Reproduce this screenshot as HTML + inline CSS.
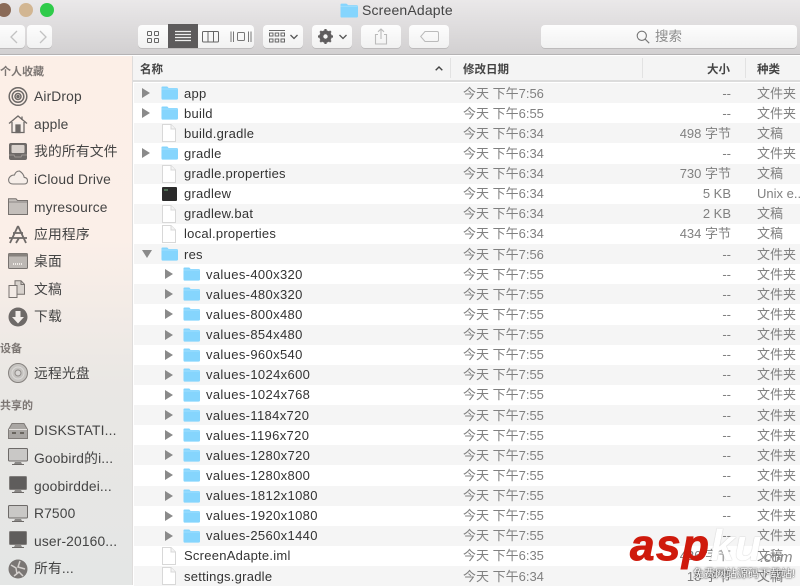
<!DOCTYPE html>
<html><head><meta charset="utf-8">
<style>
*{box-sizing:border-box}
html,body{margin:0;padding:0;background:#fff}
body{width:800px;height:585px;overflow:hidden;position:relative;background:#fff;font-family:"Liberation Sans","Noto Sans CJK SC",sans-serif;color:#333;filter:blur(.35px)}
.abs,.btn,.sb,.sh,.r span,.r svg{position:absolute}
#tb{position:absolute;left:0;top:0;width:800px;height:55px;background:linear-gradient(#eae8e9,#d2d0d1);border-bottom:1px solid #b5b3b4}
.btn{top:25px;height:23px;background:linear-gradient(#fdfdfd,#f1f1f1);border-radius:4px;box-shadow:0 1px 0 #bdbbbc}
#side{position:absolute;left:0;top:56px;width:133px;height:529px;background:linear-gradient(#fcefe7 0,#fbefe8 35%,#e9e7e4 62%,#e4e6e5 100%);border-right:1px solid #dedcdb}
.sh{left:0;font-size:11px;font-weight:bold;color:#7c7673;line-height:14px}
.sb{left:34px;margin-top:1px;font-size:13.8px;color:#444;line-height:18px;white-space:nowrap;letter-spacing:.15px}
.si{position:absolute;left:8px}
#hd{position:absolute;left:133px;top:56px;width:667px;height:26px;background:#f4f4f4;border-bottom:2px solid #dcdcdc;font-size:11.5px;font-weight:bold;color:#444}
#hd span{position:absolute;top:5px}
#hd i{position:absolute;top:2px;width:1px;height:20px;background:#e2e2e2}
#list{position:absolute;left:134px;top:83px;width:666px}
.r{position:relative;height:20.125px;font-size:13px;line-height:20px;white-space:nowrap}
.r:nth-child(odd){background:#f5f5f5}
.r span{top:.6px}
.n{left:50px;color:#333;letter-spacing:.25px}
.n2{left:72px;color:#333;letter-spacing:.35px}
.d{left:329px;color:#808080;font-size:13px}
.z{right:69px;color:#808080;font-size:13px}
.k{left:623px;color:#808080;font-size:13px}
.r .tri{left:8px;top:5px;width:8px;height:10px}
.r .tri2{left:31px;top:5px;width:8px;height:10px}
.r .f{left:27px;top:3px;width:17px;height:14px}
.r .f2{left:49px;top:3px;width:17px;height:14px}
.doc{left:28px;top:1px}
</style></head><body>
<svg width="0" height="0" style="position:absolute"><defs>
<symbol id="fo" viewBox="0 0 18 16" preserveAspectRatio="none"><path d="M.5 3V1.600q0-1 1-1h4.600q.8 0 1.300.8l.6.9h8.500q1.500 0 1.500 1.500V14q0 1.500-1.500 1.500h-15Q.5 15.500.5 14z" fill="#85d5fd"/><path d="M.5 3.400h17" stroke="#a8e2fe" stroke-width=".8"/></symbol>
<symbol id="dc" viewBox="0 0 14 18"><path d="M.5.5h8.500l4.500 4.500v12.500H.5z" fill="#fff" stroke="#d8d8d8"/><path d="M9 .5V5h4.500" fill="#f4f4f4" stroke="#d8d8d8"/></symbol>
<symbol id="tr" viewBox="0 0 9 9" preserveAspectRatio="none"><path d="M0 0l9 4.500-9 4.500z" fill="#8a8a8a"/></symbol>
<symbol id="mon" viewBox="0 0 20 18"><rect x=".5" y=".5" width="19" height="12.500" rx="1" fill="#c9c8c6" stroke="#6d6a68"/><path d="M7 14h6l1 2H6z" fill="#8b8987"/><path d="M4 16.500h12" stroke="#6d6a68"/></symbol>
<symbol id="mond" viewBox="0 0 20 18"><rect x="1.500" y=".5" width="17" height="13" rx="1" fill="#5f5d5c" stroke="#807d7b"/><path d="M7 14h6l1 2H6z" fill="#8b8987"/><path d="M4 16.500h12" stroke="#6d6a68"/></symbol>
</defs></svg>

<div id="tb">
<div class="abs" style="left:-3px;top:3px;width:14px;height:14px;border-radius:50%;background:#8a6a57"></div>
<div class="abs" style="left:19px;top:3px;width:14px;height:14px;border-radius:50%;background:#d2b692"></div>
<div class="abs" style="left:40px;top:3px;width:14px;height:14px;border-radius:50%;background:#2fcb4a"></div>
<svg class="abs" style="left:340px;top:3px" width="18" height="15"><use href="#fo" width="18" height="15"/></svg>
<div class="abs" style="left:362px;top:2px;font-size:14px;line-height:17px;color:#444;letter-spacing:.17px">ScreenAdapte</div>

<div class="btn" style="left:-4px;width:29px"></div>
<div class="btn" style="left:27px;width:25px"></div>
<svg class="abs" style="left:4px;top:29px" width="44" height="16" fill="none" stroke="#c2c2c2" stroke-width="1.300"><path d="M13 2L7 8l6 6M36 2l6 6-6 6"/></svg>

<div class="btn" style="left:138px;width:116px"></div>
<div class="abs" style="left:168px;top:24px;width:30px;height:24px;background:#5d5b5c"></div>
<svg class="abs" style="left:147px;top:31px" width="12" height="12" fill="none" stroke="#666"><rect x=".5" y=".5" width="4" height="4" rx=".6"/><rect x="7.500" y=".5" width="4" height="4" rx=".6"/><rect x=".5" y="7.500" width="4" height="4" rx=".6"/><rect x="7.500" y="7.500" width="4" height="4" rx=".6"/></svg>
<svg class="abs" style="left:175px;top:30px" width="16" height="13" stroke="#eee" stroke-width="1.200"><path d="M0 1.500h16M0 4.500h16M0 7.500h16M0 10.500h16"/></svg>
<svg class="abs" style="left:202px;top:31px" width="18" height="12" fill="none" stroke="#666"><rect x=".5" y=".5" width="16" height="10.500" rx="1"/><path d="M6 .5v10.500M11.500 .5v10.500"/></svg>
<svg class="abs" style="left:230px;top:31px" width="22" height="12" fill="none" stroke="#777"><rect x="7.500" y="1.500" width="7" height="8" rx="1"/><path d="M1 .5v10.500M3.500 .5v10.500M18.500 .5v10.500M21 .5v10.500"/></svg>

<div class="btn" style="left:263px;width:40px"></div>
<svg class="abs" style="left:269px;top:30px" width="16" height="14" fill="none" stroke="#666"><path d="M0 .5h16"/><rect x=".5" y="3" width="3.500" height="3"/><rect x="6.200" y="3" width="3.500" height="3"/><rect x="12" y="3" width="3.500" height="3"/><rect x=".5" y="9" width="3.500" height="3"/><rect x="6.200" y="9" width="3.500" height="3"/><rect x="12" y="9" width="3.500" height="3"/></svg>
<svg class="abs" style="left:290px;top:34px" width="8" height="6" fill="none" stroke="#555" stroke-width="1.300"><path d="M.5 1L4 4.500 7.500 1"/></svg>

<div class="btn" style="left:312px;width:40px"></div>
<svg class="abs" style="left:318px;top:29px" width="15" height="15"><circle cx="7.500" cy="7.500" r="4.700" fill="none" stroke="#5f5d5e" stroke-width="3"/><path d="M7.500 0v15M0 7.500h15M2.200 2.200l10.600 10.600M12.800 2.200L2.200 12.800" stroke="#5f5d5e" stroke-width="2.200"/><circle cx="7.500" cy="7.500" r="2.200" fill="#f6f6f6"/></svg>
<svg class="abs" style="left:339px;top:34px" width="8" height="6" fill="none" stroke="#555" stroke-width="1.300"><path d="M.5 1L4 4.500 7.500 1"/></svg>

<div class="btn" style="left:361px;width:40px"></div>
<svg class="abs" style="left:374px;top:28px" width="14" height="17" fill="none" stroke="#bbb" stroke-width="1.100"><path d="M4 6.500H1.500v9.500h11V6.500H10M7 11V1M4 3.800L7 1l3 2.800"/></svg>

<div class="btn" style="left:409px;width:40px"></div>
<svg class="abs" style="left:420px;top:31px" width="19" height="11" fill="none" stroke="#bbb"><path d="M5 .5h12q1.500 0 1.500 1.500v7q0 1.500-1.500 1.500H5L.7 5.500z"/></svg>

<div class="btn" style="left:541px;width:256px"></div>
<svg class="abs" style="left:636px;top:30px" width="14" height="14" fill="none" stroke="#777" stroke-width="1.100"><circle cx="5.800" cy="5.800" r="4.600"/><path d="M9.200 9.200l4 4"/></svg>
<div class="abs" style="left:655px;top:28px;font-size:13.5px;line-height:17px;color:#8c8c8c">搜索</div>
</div>

<div id="side">
<div class="sh" style="top:9px">个人收藏</div>

<svg class="si" style="top:31px" width="20" height="19" fill="none" stroke="#6e6a68" stroke-width="1.500"><circle cx="10" cy="9.500" r="8.800"/><circle cx="10" cy="9.500" r="5.800"/><circle cx="10" cy="9.500" r="3"/><circle cx="10" cy="9.500" r="1" fill="#6e6a68"/></svg>
<div class="sb" style="top:31px">AirDrop</div>

<svg class="si" style="top:58px" width="20" height="20" fill="none" stroke="#6e6a68" stroke-width="1.300"><path d="M1 9.500L10 2l9 7.500"/><path d="M4 8v10.500h12V8" fill="#f6eee9"/><rect x="8" y="11" width="4" height="7.500" fill="#6e6a68"/><path d="M14 2.500V6"/></svg>
<div class="sb" style="top:59px">apple</div>

<svg class="si" style="top:87px" width="20" height="17"><rect x="1" y="0" width="18" height="17" rx="2" fill="#6e6a68"/><rect x="3.500" y="2" width="13" height="8" rx="1" fill="#d9d2cd"/><path d="M1 12h5l1 2h6l1-2h5" fill="none" stroke="#9c9692"/></svg>
<div class="sb" style="top:86px">我的所有文件</div>

<svg class="si" style="top:114px" width="20" height="15" fill="none" stroke="#7a7674" stroke-width="1.100"><path d="M5 14h11q3.500 0 3.500-3.300 0-3-3.300-3.300C15.700 4 13.800 2.500 11.500 1 9 1 7.200 2.500 6.500 5 3 4.800 .6 7.500 .6 10 .6 12.500 2.500 14 5 14z" fill="#f6eee9"/></svg>
<div class="sb" style="top:114px">iCloud Drive</div>

<svg class="si" style="top:142px" width="20" height="17"><path d="M.5 16.500V.8h7.500l1.500 1.700h10v14z" fill="#c4bfbb" stroke="#77726f"/><path d="M1 4h18" stroke="#8c8784"/></svg>
<div class="sb" style="top:142px">myresource</div>

<svg class="si" style="top:169px" width="20" height="19" fill="none" stroke="#6e6a68" stroke-width="1.800"><path d="M10 1L2 18M10 1l8 17M1 13h18M5 8h10M8 18l3-5"/></svg>
<div class="sb" style="top:169px">应用程序</div>

<svg class="si" style="top:197px" width="20" height="16"><rect x=".5" y=".5" width="19" height="15" rx="1" fill="#bdb8b4" stroke="#77726f"/><rect x=".5" y=".5" width="19" height="3" fill="#87827e"/><path d="M5 11h10" stroke="#f1ece8" stroke-width="2" stroke-dasharray="1 1"/></svg>
<div class="sb" style="top:196px">桌面</div>

<svg class="si" style="top:224px" width="19" height="18" fill="none" stroke="#77726f"><path d="M7 .8h6l3.500 3.500v10H7z" fill="#d8d2cd"/><path d="M1 5.500h8v12H1z" fill="#f3ebe6"/><path d="M13 1v3.500h3.500"/></svg>
<div class="sb" style="top:224px">文稿</div>

<svg class="si" style="top:251px" width="20" height="20"><circle cx="10" cy="10" r="9.500" fill="#6e6a68"/><path d="M7.500 4h5v6H16l-6 6.500L4 10h3.500z" fill="#f3eeea"/></svg>
<div class="sb" style="top:251px">下载</div>

<div class="sh" style="top:286px">设备</div>
<svg class="si" style="top:307px" width="20" height="20"><circle cx="10" cy="10" r="9.500" fill="#c6c4c1" stroke="#85817e"/><circle cx="10" cy="10" r="6" fill="none" stroke="#dcdad8"/><circle cx="10" cy="10" r="3" fill="#d8d6d4" stroke="#8f8b88"/></svg>
<div class="sb" style="top:308px">远程光盘</div>

<div class="sh" style="top:343px">共享的</div>
<svg class="si" style="top:367px" width="20" height="16"><path d="M4 .5h12l3.500 6v9H.5v-9z" fill="#a9a6a3" stroke="#807c79"/><path d="M1 6.500h18" stroke="#e3e0dd"/><path d="M4 10h4M12 10h4" stroke="#69655f" stroke-width="2"/></svg>
<div class="sb" style="top:365px">DISKSTATI...</div>

<svg class="si" style="top:392px" width="20" height="18"><use href="#mon" width="20" height="18"/></svg>
<div class="sb" style="top:393px">Goobird的i...</div>

<svg class="si" style="top:420px" width="20" height="18"><use href="#mond" width="20" height="18"/></svg>
<div class="sb" style="top:421px">goobirddei...</div>

<svg class="si" style="top:449px" width="20" height="18"><use href="#mon" width="20" height="18"/></svg>
<div class="sb" style="top:448px">R7500</div>

<svg class="si" style="top:475px" width="20" height="18"><use href="#mond" width="20" height="18"/></svg>
<div class="sb" style="top:476px">user-20160...</div>

<svg class="si" style="top:503px" width="20" height="20" fill="none"><circle cx="10" cy="10" r="9.500" fill="#7a7674"/><path d="M3 6l5 3 1 6M12 2l-2 6 7 2M6 17l5-4 4 4" stroke="#d5d1ce" stroke-width="1.500"/></svg>
<div class="sb" style="top:503px">所有...</div>
</div>

<div id="hd">
<span style="left:7px">名称</span>
<svg class="abs" style="left:302px;top:10px" width="8" height="5" fill="none" stroke="#444" stroke-width="1.400"><path d="M.7 4.300L4 1l3.300 3.300"/></svg>
<i style="left:317px"></i>
<span style="left:330px">修改日期</span>
<i style="left:509px"></i>
<span style="left:574px">大小</span>
<i style="left:612px"></i>
<span style="left:624px">种类</span>
</div>

<div id="list">
<div class="r"><svg class="tri"><use href="#tr"/></svg><svg class="f"><use href="#fo"/></svg><span class="n">app</span><span class="d">今天 下午7:56</span><span class="z">--</span><span class="k">文件夹</span></div>
<div class="r"><svg class="tri"><use href="#tr"/></svg><svg class="f"><use href="#fo"/></svg><span class="n">build</span><span class="d">今天 下午6:55</span><span class="z">--</span><span class="k">文件夹</span></div>
<div class="r"><svg class="doc" width="14" height="18"><use href="#dc"/></svg><span class="n">build.gradle</span><span class="d">今天 下午6:34</span><span class="z">498 字节</span><span class="k">文稿</span></div>
<div class="r"><svg class="tri"><use href="#tr"/></svg><svg class="f"><use href="#fo"/></svg><span class="n">gradle</span><span class="d">今天 下午6:34</span><span class="z">--</span><span class="k">文件夹</span></div>
<div class="r"><svg class="doc" width="14" height="18"><use href="#dc"/></svg><span class="n">gradle.properties</span><span class="d">今天 下午6:34</span><span class="z">730 字节</span><span class="k">文稿</span></div>
<div class="r"><svg style="left:28px;top:3px" width="15" height="14"><rect width="15" height="14" rx="1" fill="#2b2b2b"/><path d="M2 3h4" stroke="#6fae7a"/></svg><span class="n">gradlew</span><span class="d">今天 下午6:34</span><span class="z">5 KB</span><span class="k">Unix e...</span></div>
<div class="r"><svg class="doc" width="14" height="18"><use href="#dc"/></svg><span class="n">gradlew.bat</span><span class="d">今天 下午6:34</span><span class="z">2 KB</span><span class="k">文稿</span></div>
<div class="r"><svg class="doc" width="14" height="18"><use href="#dc"/></svg><span class="n">local.properties</span><span class="d">今天 下午6:34</span><span class="z">434 字节</span><span class="k">文稿</span></div>
<div class="r"><svg style="left:8px;top:6px" width="10" height="8"><path d="M0 0h10L5 8z" fill="#8a8a8a"/></svg><svg class="f"><use href="#fo"/></svg><span class="n">res</span><span class="d">今天 下午7:56</span><span class="z">--</span><span class="k">文件夹</span></div>
<div class="r"><svg class="tri2"><use href="#tr"/></svg><svg class="f2"><use href="#fo"/></svg><span class="n2">values-400x320</span><span class="d">今天 下午7:55</span><span class="z">--</span><span class="k">文件夹</span></div>
<div class="r"><svg class="tri2"><use href="#tr"/></svg><svg class="f2"><use href="#fo"/></svg><span class="n2">values-480x320</span><span class="d">今天 下午7:55</span><span class="z">--</span><span class="k">文件夹</span></div>
<div class="r"><svg class="tri2"><use href="#tr"/></svg><svg class="f2"><use href="#fo"/></svg><span class="n2">values-800x480</span><span class="d">今天 下午7:55</span><span class="z">--</span><span class="k">文件夹</span></div>
<div class="r"><svg class="tri2"><use href="#tr"/></svg><svg class="f2"><use href="#fo"/></svg><span class="n2">values-854x480</span><span class="d">今天 下午7:55</span><span class="z">--</span><span class="k">文件夹</span></div>
<div class="r"><svg class="tri2"><use href="#tr"/></svg><svg class="f2"><use href="#fo"/></svg><span class="n2">values-960x540</span><span class="d">今天 下午7:55</span><span class="z">--</span><span class="k">文件夹</span></div>
<div class="r"><svg class="tri2"><use href="#tr"/></svg><svg class="f2"><use href="#fo"/></svg><span class="n2">values-1024x600</span><span class="d">今天 下午7:55</span><span class="z">--</span><span class="k">文件夹</span></div>
<div class="r"><svg class="tri2"><use href="#tr"/></svg><svg class="f2"><use href="#fo"/></svg><span class="n2">values-1024x768</span><span class="d">今天 下午7:55</span><span class="z">--</span><span class="k">文件夹</span></div>
<div class="r"><svg class="tri2"><use href="#tr"/></svg><svg class="f2"><use href="#fo"/></svg><span class="n2">values-1184x720</span><span class="d">今天 下午7:55</span><span class="z">--</span><span class="k">文件夹</span></div>
<div class="r"><svg class="tri2"><use href="#tr"/></svg><svg class="f2"><use href="#fo"/></svg><span class="n2">values-1196x720</span><span class="d">今天 下午7:55</span><span class="z">--</span><span class="k">文件夹</span></div>
<div class="r"><svg class="tri2"><use href="#tr"/></svg><svg class="f2"><use href="#fo"/></svg><span class="n2">values-1280x720</span><span class="d">今天 下午7:55</span><span class="z">--</span><span class="k">文件夹</span></div>
<div class="r"><svg class="tri2"><use href="#tr"/></svg><svg class="f2"><use href="#fo"/></svg><span class="n2">values-1280x800</span><span class="d">今天 下午7:55</span><span class="z">--</span><span class="k">文件夹</span></div>
<div class="r"><svg class="tri2"><use href="#tr"/></svg><svg class="f2"><use href="#fo"/></svg><span class="n2">values-1812x1080</span><span class="d">今天 下午7:55</span><span class="z">--</span><span class="k">文件夹</span></div>
<div class="r"><svg class="tri2"><use href="#tr"/></svg><svg class="f2"><use href="#fo"/></svg><span class="n2">values-1920x1080</span><span class="d">今天 下午7:55</span><span class="z">--</span><span class="k">文件夹</span></div>
<div class="r"><svg class="tri2"><use href="#tr"/></svg><svg class="f2"><use href="#fo"/></svg><span class="n2">values-2560x1440</span><span class="d">今天 下午7:55</span><span class="z">--</span><span class="k">文件夹</span></div>
<div class="r"><svg class="doc" width="14" height="18"><use href="#dc"/></svg><span class="n">ScreenAdapte.iml</span><span class="d">今天 下午6:35</span><span class="z">426 字节</span><span class="k">文稿</span></div>
<div class="r"><svg class="doc" width="14" height="18"><use href="#dc"/></svg><span class="n">settings.gradle</span><span class="d">今天 下午6:34</span><span class="z">18 字节</span><span class="k">文稿</span></div>
</div>

<div class="abs" style="left:630px;top:521px;font-size:44px;line-height:50px;font-weight:bold;font-style:italic;color:#cf1a0c;letter-spacing:1.500px;-webkit-text-stroke:1px #cf1a0c;white-space:nowrap">asp</div>
<div class="abs" style="left:710px;top:521px;font-size:44px;line-height:50px;font-weight:bold;font-style:italic;color:#fff;text-shadow:0 0 1px #aaa;white-space:nowrap">ku</div>
<div class="abs" style="left:760px;top:549px;font-size:15px;line-height:18px;font-style:italic;color:#888;white-space:nowrap">.com</div>
<div class="abs" style="left:693px;top:567px;font-size:11px;line-height:15px;color:#fff;text-shadow:0 0 2px #444,0 0 1px #222;white-space:nowrap">免费网站源码下载站!</div>
</body></html>
